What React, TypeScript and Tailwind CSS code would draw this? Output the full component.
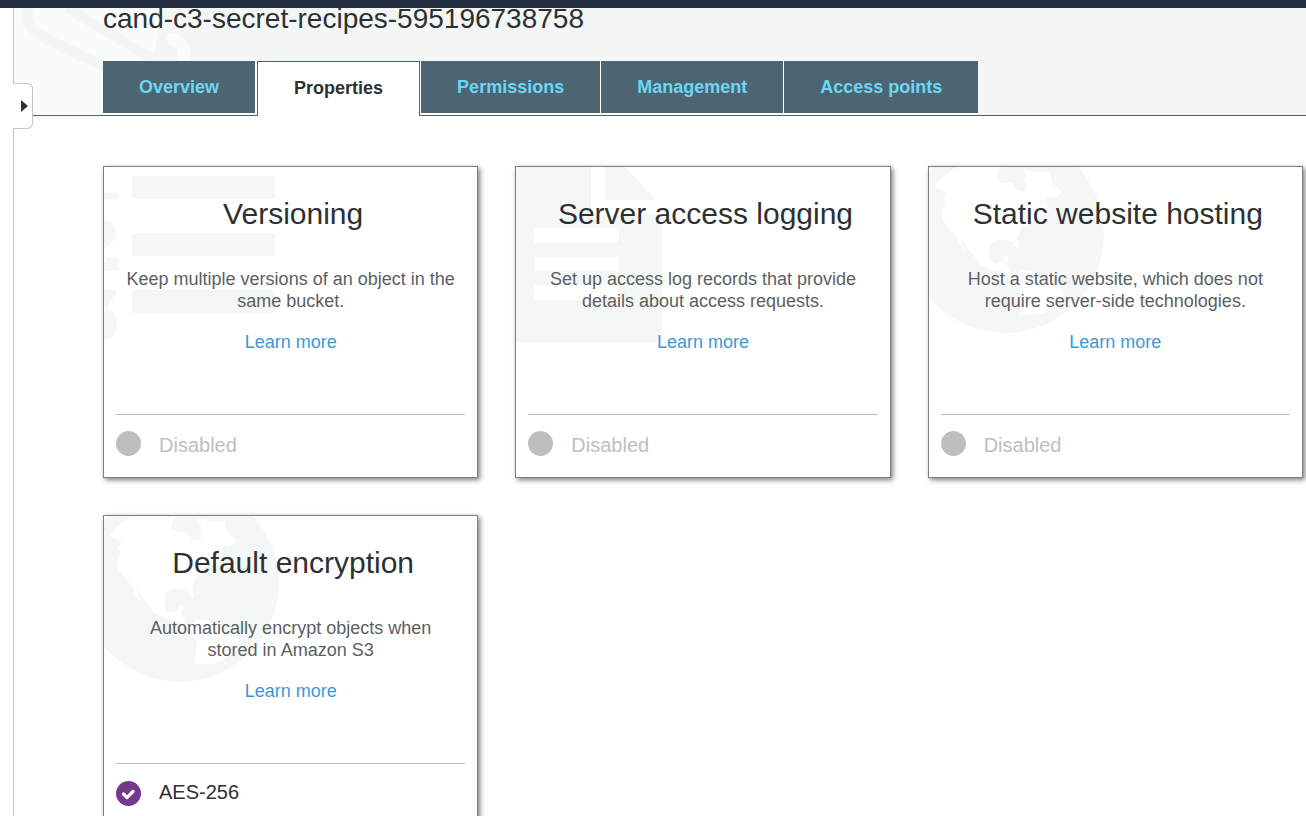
import React from "react";

const SHADE = "#f5f7f7";

function ListArt() {
  return (
    <svg width="172" height="176" viewBox="0 0 172 176" fill={SHADE} aria-hidden="true">
      <rect x="28" y="9" width="143" height="23" rx="3" />
      <rect x="28" y="66" width="143" height="23" rx="3" />
      <rect x="28" y="123" width="143" height="23" rx="3" />
      <path d="M0 26h14v6H0z" />
      <path d="M0 53C8 54 12 60 12 66C12 73 7 78 0 81z" />
      <path d="M0 94H2V91H14V104H0z" />
      <path d="M0 123H12V127L3 142C10 144 13 151 13 158C13 166 8 172 0 174V145L3 142L0 136z" />
    </svg>
  );
}

function DocumentArt() {
  return (
    <svg width="148" height="176" viewBox="0 0 148 176" aria-hidden="true">
      <path fill={SHADE} d="M0 0H75V45Q75 48 78 48H146V171Q146 175 142 175H0z" />
      <path fill={SHADE} d="M89 0H109L141 33H89z" />
      <g fill="#fff">
        <rect x="18" y="61" width="85" height="15" rx="3" />
        <rect x="18" y="90" width="85" height="14" rx="3" />
        <rect x="18" y="118" width="85" height="15" rx="3" />
      </g>
    </svg>
  );
}

function GlobeArt() {
  return (
    <svg width="176" height="167" viewBox="0 0 176 167" aria-hidden="true">
      <circle cx="76" cy="67" r="99" fill={SHADE} />
      <path
        fill="#fff"
        d="M5 20C12 11 20 5 28 0H74L69 4L67 12L73 16L83 16L88 24L96 25L98 18L95 14L98 8L94 5L96 1L103 5L107 5L116 5L121 6L122 12L124 18L130 21L133 25L132 27L125 31L121 29L116 32L119 35L111 33L105 36L110 34L118 37L119 44L112 48L103 53L98 57L91 62L91 65L88 70L90 79L90 83L86 79L83 74L76 73L68 73L61 77L60 85L61 94L67 97L74 95L75 90L79 89L79 94L76 99L81 101L80 107L86 109L92 104L101 103L110 108L117 110L122 119L134 123L135 131L128 137L120 144L111 147L97 148L90 148L92 136L93 126L87 117L79 108L71 104L62 103L51 97L45 89L39 82L31 70L36 84L32 80L28 70L21 62L14 53L13 44L17 37L14 32L18 27L12 23z"
      />
    </svg>
  );
}

function BucketArt() {
  return (
    <svg width="180" height="107" viewBox="0 0 180 107" fill="none" aria-hidden="true">
      <path d="M0 0H149L139 54V107H0z" fill="#fafcfb" />
      <path d="M15 0Q9 14 22 24Q34 33 92 59" stroke="#f4f6f6" strokeWidth="11" />
      <path d="M53 0L146 55" stroke="#f4f6f6" strokeWidth="10" />
      <path d="M159 31Q173 34 169 54" stroke="#fafcfb" strokeWidth="13" strokeLinecap="round" />
    </svg>
  );
}

type Card = {
  title: string;
  text: string;
  art: React.ReactNode;
  status: string;
  on?: boolean;
};

const cards: Card[] = [
  { title: "Versioning", text: "Keep multiple versions of an object in the same bucket.", art: <ListArt />, status: "Disabled" },
  { title: "Server access logging", text: "Set up access log records that provide details about access requests.", art: <DocumentArt />, status: "Disabled" },
  { title: "Static website hosting", text: "Host a static website, which does not require server-side technologies.", art: <GlobeArt />, status: "Disabled" },
  { title: "Default encryption", text: "Automatically encrypt objects when stored in Amazon S3", art: <GlobeArt />, status: "AES-256", on: true },
];

function PropertyCard({ title, text, art, status, on }: Card) {
  return (
    <article className="relative flex h-[312px] flex-col border border-[#7b7f80] bg-white px-3 shadow-[2px_2px_5px_rgba(0,0,0,0.5)]">
      <div className="absolute top-0 left-0">{art}</div>
      <div className="relative flex grow flex-col items-center text-center">
        <h2 className="mt-[29px] pl-[5px] text-[30px] leading-9 whitespace-nowrap text-[#2d3132]">{title}</h2>
        <p className="mt-9 max-w-[332px] text-[18px] leading-[22px] text-[#5b6061]">{text}</p>
        <a href="#learn" className="mt-[19px] text-[18px] leading-[22px] text-[#3b99d8]">Learn more</a>
      </div>
      <footer className="relative flex h-[63px] items-start gap-[18px] border-t border-[#bcbfbf] pt-4">
        {on ? (
          <svg width="25" height="25" viewBox="0 0 25 25" aria-hidden="true" className="mt-px">
            <circle cx="12.5" cy="12.5" r="12.5" fill="#75398a" />
            <path d="M7.5 13L11 16.5L17 10.5" fill="none" stroke="#fff" strokeWidth="3.2" strokeLinecap="round" strokeLinejoin="round" />
          </svg>
        ) : (
          <span className="size-[25px] rounded-full bg-[#bcbfbe]" />
        )}
        <span className={on ? "text-[20px] leading-6 text-[#2d3132]" : "pt-0.5 text-[20px] leading-6 text-[#bcbfbe]"}>{status}</span>
      </footer>
    </article>
  );
}

const tabClass = "bg-[#4d6572] px-9 text-[18px] leading-[52px] font-bold text-[#6bd7f5]";

export default function App() {
  return (
    <div className="flex h-screen flex-col overflow-hidden bg-white font-['Liberation_Sans',Arial,sans-serif]">
      <div className="h-2 shrink-0 bg-[#232f3e]" />
      <div className="relative ml-[13px] min-h-0 grow border-l border-[#c4c7c7]">
        <header className="relative flex h-[108px] flex-col justify-between border-b border-[#4d6572] bg-[#f4f6f6]">
          <div className="absolute top-0 left-0">
            <BucketArt />
          </div>
          <h1 className="relative -mt-[7px] pl-[89px] text-[28px] leading-9 whitespace-nowrap text-[#2d3132]">
            cand-c3-secret-recipes-595196738758
          </h1>
          <nav className="relative -mb-px ml-[89px] flex h-[55px] items-start whitespace-nowrap">
            <div className="flex border-b-2 border-white bg-white pr-0.5">
              <button className={tabClass}>Overview</button>
            </div>
            <button className="h-[55px] border border-b-0 border-[#4d6572] bg-white px-9 pb-0.5 text-[18px] font-bold text-[#2d3132]">
              Properties
            </button>
            <div className="flex gap-px border-b-2 border-white bg-white pl-px">
              <button className={tabClass}>Permissions</button>
              <button className={tabClass}>Management</button>
              <button className={tabClass}>Access points</button>
            </div>
          </nav>
        </header>
        <button
          aria-label="Expand side panel"
          className="absolute top-[75px] -left-px flex h-[46px] w-5 items-center justify-center rounded-r-md border border-l-0 border-[#c4c7c7] bg-white pb-px pl-1"
        >
          <svg width="7" height="12" viewBox="0 0 7 12" fill="#2d3132" aria-hidden="true">
            <path d="M0 0L7 6L0 12z" />
          </svg>
        </button>
        <main className="grid grid-cols-3 gap-[37px] pt-[50px] pr-[3px] pl-[89px]">
          {cards.map((card) => (
            <PropertyCard key={card.title} {...card} />
          ))}
        </main>
      </div>
    </div>
  );
}
